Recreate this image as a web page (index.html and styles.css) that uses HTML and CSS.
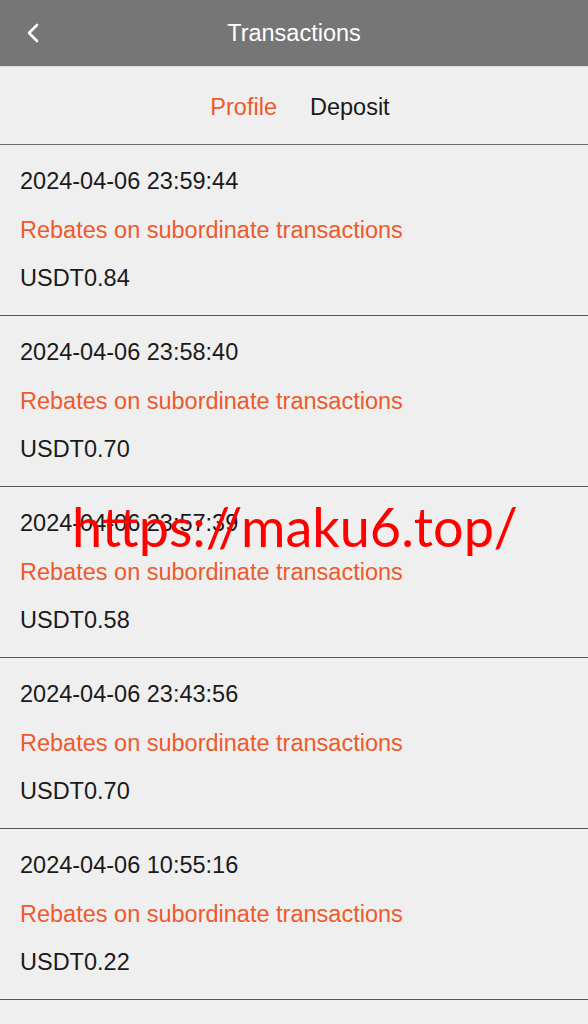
FILE: index.html
```html
<!DOCTYPE html>
<html>
<head>
<meta charset="utf-8">
<link rel="stylesheet" href="styles.css">
</head>
<body>
<div class="page">
  <header class="topbar">
    <span class="back">
      <svg width="14" height="20" viewBox="0 0 14 20"><path d="M11 2 L3 10 L11 18" fill="none" stroke="#fff" stroke-width="2.6" stroke-linecap="round" stroke-linejoin="round"/></svg>
    </span>
    <h1 class="title">Transactions</h1>
  </header>
  <nav class="tabs">
    <span class="tab active">Profile</span>
    <span class="tab">Deposit</span>
  </nav>
  <ul class="list">
    <li class="item"><div class="date">2024-04-06 23:59:44</div><div class="kind">Rebates on subordinate transactions</div><div class="amount">USDT0.84</div></li>
    <li class="item"><div class="date">2024-04-06 23:58:40</div><div class="kind">Rebates on subordinate transactions</div><div class="amount">USDT0.70</div></li>
    <li class="item"><div class="date">2024-04-06 23:57:39</div><div class="kind">Rebates on subordinate transactions</div><div class="amount">USDT0.58</div></li>
    <li class="item"><div class="date">2024-04-06 23:43:56</div><div class="kind">Rebates on subordinate transactions</div><div class="amount">USDT0.70</div></li>
    <li class="item"><div class="date">2024-04-06 10:55:16</div><div class="kind">Rebates on subordinate transactions</div><div class="amount">USDT0.22</div></li>
  </ul>
  <div class="watermark">https://maku6.top/</div>
</div>
</body>
</html>
```
FILE: styles.css
```css
html, body {
  margin: 0;
  padding: 0;
  background: #efefef;
}
.page {
  position: relative;
  width: 588px;
  min-height: 1024px;
  background: #efefef;
  font-family: "Liberation Sans", Arial, sans-serif;
  color: #1a1a1a;
}
.topbar {
  height: 66px;
  background: #767676;
  display: flex;
  align-items: center;
  justify-content: center;
  position: relative;
}
.back {
  position: absolute;
  left: 26px;
  top: 23px;
  display: flex;
}
.title {
  margin: 0;
  font-size: 23.5px;
  font-weight: normal;
  color: #fff;
}
.tabs {
  display: flex;
  justify-content: center;
  align-items: center;
  gap: 33px;
  padding: 3px 0 0 12px;
  border-top: 1px solid #dcdcdc;
  border-bottom: 1px solid #6a6a6a;
  font-size: 23.5px;
  box-sizing: border-box;
  height: 79px;
}
.tab { color: #1a1a1a; }
.tab.active { color: #ee5a2c; }
.list {
  list-style: none;
  margin: 0;
  padding: 0;
}
.item {
  padding: 12px 20px 12.5px;
  border-bottom: 1px solid #555;
  font-size: 23.5px;
  line-height: 48.5px;
}
.kind { color: #ee5a2c; }
.watermark {
  position: absolute;
  left: 72px;
  top: 492px;
  font-family: Lato, "Open Sans", sans-serif;
  font-size: 54px;
  color: #ff0000;
  line-height: 70px;
  white-space: nowrap;
}
```
